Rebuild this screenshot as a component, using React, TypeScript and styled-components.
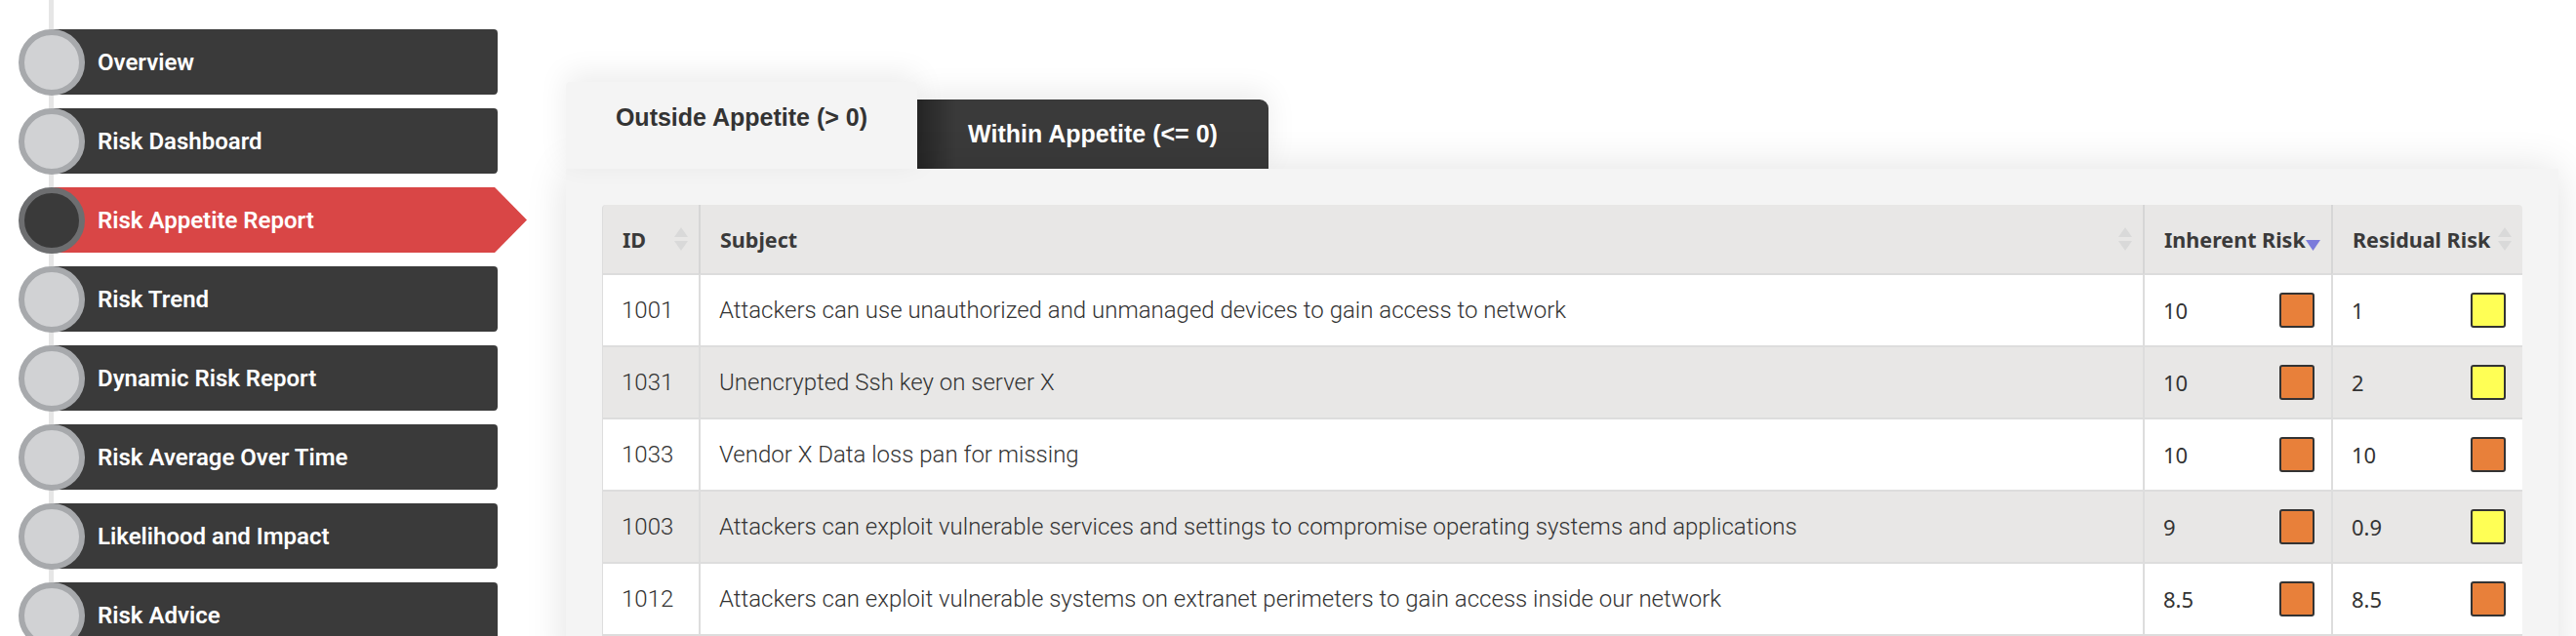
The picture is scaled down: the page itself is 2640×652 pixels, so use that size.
import React from "react";
import styled, { createGlobalStyle } from "styled-components";

type Risk = {
  id: number;
  subject: string;
  inherent: string;
  residual: string;
};

const navItems = [
  "Overview",
  "Risk Dashboard",
  "Risk Appetite Report",
  "Risk Trend",
  "Dynamic Risk Report",
  "Risk Average Over Time",
  "Likelihood and Impact",
  "Risk Advice",
];

const risks: Risk[] = [
  {
    id: 1001,
    subject:
      "Attackers can use unauthorized and unmanaged devices to gain access to network",
    inherent: "10",
    residual: "1",
  },
  { id: 1031, subject: "Unencrypted Ssh key on server X", inherent: "10", residual: "2" },
  { id: 1033, subject: "Vendor X Data loss pan for missing", inherent: "10", residual: "10" },
  {
    id: 1003,
    subject:
      "Attackers can exploit vulnerable services and settings to compromise operating systems and applications",
    inherent: "9",
    residual: "0.9",
  },
  {
    id: 1012,
    subject:
      "Attackers can exploit vulnerable systems on extranet perimeters to gain access inside our network",
    inherent: "8.5",
    residual: "8.5",
  },
];

// scores above 3 are orange, the rest yellow
const riskColor = (score: string) => (parseFloat(score) > 3 ? "#e8803a" : "#ffff55");

const GlobalStyle = createGlobalStyle`
  html, body {
    margin: 0;
    padding: 0;
    background: #fff;
    overflow: hidden;
  }
  body {
    font-family: Roboto, "Liberation Sans", sans-serif;
  }
`;

const Page = styled.div`
  display: flex;
  width: 2640px;
  height: 652px;
  overflow: hidden;
`;

// SIDEBAR
const Sidebar = styled.nav`
  flex: 0 0 580px;
  display: flex;
  flex-direction: column;
  gap: 14px;
  padding: 30px 0 0 19px;
  box-sizing: border-box;
  /* the timeline behind the circles */
  background: linear-gradient(#e6e6e6, #e6e6e6) no-repeat 50px 0 / 5px 100%;
`;

const NavItem = styled.div`
  display: flex;
  align-items: center;
  height: 67px;
  flex: 0 0 67px;
`;

const NavDot = styled.span<{ $active: boolean }>`
  position: relative;
  z-index: 1;
  flex: 0 0 68px;
  height: 68px;
  box-sizing: border-box;
  border-radius: 50%;
  border: 6px solid ${(p) => (p.$active ? "#6d6e70" : "#a7a9ac")};
  background: ${(p) => (p.$active ? "#3a3a3a" : "#d1d2d4")};
`;

const NavBar = styled.div<{ $active: boolean }>`
  margin-left: -34px;
  width: ${(p) => (p.$active ? "487px" : "457px")};
  height: 67px;
  display: flex;
  align-items: center;
  padding-left: 47px;
  box-sizing: border-box;
  border-radius: 4px;
  background: ${(p) => (p.$active ? "#d94646" : "#3a3a3a")};
  clip-path: ${(p) =>
    p.$active
      ? "polygon(0 0, calc(100% - 33px) 0, 100% 50%, calc(100% - 33px) 100%, 0 100%)"
      : "none"};
  color: #fff;
  font-family: Roboto, "Liberation Sans", sans-serif;
  font-weight: 600;
  font-size: 24px;
  white-space: nowrap;
`;

// MAIN
const Main = styled.main`
  flex: 1;
  padding: 84px 18px 0 0;
  display: flex;
  flex-direction: column;
`;

const Tabs = styled.div`
  display: flex;
  align-items: flex-end;
`;

const Tab = styled.div<{ $active: boolean }>`
  position: relative;
  z-index: ${(p) => (p.$active ? 2 : 1)};
  width: 360px;
  height: ${(p) => (p.$active ? "89px" : "71px")};
  display: flex;
  align-items: ${(p) => (p.$active ? "flex-start" : "center")};
  justify-content: center;
  box-sizing: border-box;
  padding-top: ${(p) => (p.$active ? "22px" : "0")};
  border-radius: ${(p) => (p.$active ? "4px 4px 0 0" : "0 9px 0 0")};
  background: ${(p) =>
    p.$active ? "#f4f4f4" : "linear-gradient(to right, #262626, #3a3a3a 40px)"};
  color: ${(p) => (p.$active ? "#333" : "#fff")};
  box-shadow: 0 -8px 30px rgba(0, 0, 0, 0.08);
  font-family: "Liberation Sans", Arial, sans-serif;
  font-weight: 700;
  font-size: 25px;
  white-space: nowrap;
`;

const Panel = styled.section`
  position: relative;
  z-index: 1;
  flex: 1;
  background: #f4f4f4;
  padding: 37px;
  box-shadow: 0 0 40px rgba(0, 0, 0, 0.12);
`;

// TABLE
const Table = styled.table`
  width: 100%;
  border-collapse: separate;
  border-spacing: 0;
  table-layout: fixed;
  color: #3a3a3a;
`;

const HeadCell = styled.th<{ $width?: number }>`
  width: ${(p) => (p.$width ? `${p.$width}px` : "auto")};
  height: 72px;
  box-sizing: border-box;
  padding: 0 11px 0 20px;
  background: #e8e7e6;
  border-bottom: 2px solid #dcdcdc;
  border-left: 2px solid #d6d6d6;
  text-align: left;
  font-family: "Noto Sans", "Open Sans", sans-serif;
  font-weight: 700;
  font-size: 21.5px;
  color: #3a3a3a;
  &:first-child {
    border-left: 1px solid #dcdcdc;
    border-top-left-radius: 4px;
  }
  &:last-child {
    border-top-right-radius: 4px;
  }
`;

const HeadInner = styled.div`
  display: flex;
  align-items: center;
  justify-content: space-between;
  white-space: nowrap;
`;

const Row = styled.tr`
  &:nth-child(2n-1) {
    background: #ffffff;
  }
  &:nth-child(2n) {
    background: #e8e7e6;
  }
`;

const Cell = styled.td`
  height: 74px;
  box-sizing: border-box;
  padding: 0 17px 0 19px;
  border-bottom: 2px solid #dddddd;
  border-left: 2px solid #dddddd;
  font-family: Roboto, "Liberation Sans", sans-serif;
  font-weight: 300;
  font-size: 24px;
  color: #333;
  white-space: nowrap;
  overflow: hidden;
  &:first-child {
    border-left: 1px solid #dddddd;
  }
`;

const ScoreCell = styled(Cell)`
  font-family: "Noto Sans", "Open Sans", sans-serif;
  font-weight: 400;
  font-size: 22px;
`;

const ScoreInner = styled.div`
  display: flex;
  align-items: center;
  justify-content: space-between;
`;

const Swatch = styled.span<{ color: string }>`
  width: 36px;
  height: 36px;
  box-sizing: border-box;
  border: 2px solid #333;
  border-radius: 3px;
  background: ${(p) => p.color};
`;

const SortIcon: React.FC<{ dir?: "desc" }> = ({ dir }) =>
  dir === "desc" ? (
    <svg width="15" height="26" viewBox="0 0 15 26">
      <polygon points="0,14 15,14 7.5,25" fill="#7b7bdb" />
    </svg>
  ) : (
    <svg width="14" height="26" viewBox="0 0 14 26">
      <polygon points="7,1 14,11 0,11" fill="#d9d9d9" />
      <polygon points="0,15 14,15 7,25" fill="#d9d9d9" />
    </svg>
  );

const App: React.FC = () => {
  return (
    <Page>
      <GlobalStyle />
      {/* SIDEBAR */}
      <Sidebar>
        {navItems.map((label) => {
          const active = label === "Risk Appetite Report";
          return (
            <NavItem key={label}>
              <NavDot $active={active} />
              <NavBar $active={active}>{label}</NavBar>
            </NavItem>
          );
        })}
      </Sidebar>

      {/* REPORT */}
      <Main>
        <Tabs>
          <Tab $active>Outside Appetite (&gt; 0)</Tab>
          <Tab $active={false}>Within Appetite (&lt;= 0)</Tab>
        </Tabs>
        <Panel>
          <Table>
            <thead>
              <tr>
                <HeadCell $width={99}>
                  <HeadInner>
                    ID <SortIcon />
                  </HeadInner>
                </HeadCell>
                <HeadCell>
                  <HeadInner>
                    Subject <SortIcon />
                  </HeadInner>
                </HeadCell>
                <HeadCell $width={193}>
                  <HeadInner>
                    Inherent Risk <SortIcon dir="desc" />
                  </HeadInner>
                </HeadCell>
                <HeadCell $width={196}>
                  <HeadInner>
                    Residual Risk <SortIcon />
                  </HeadInner>
                </HeadCell>
              </tr>
            </thead>
            <tbody>
              {risks.map((risk) => (
                <Row key={risk.id}>
                  <Cell>{risk.id}</Cell>
                  <Cell>{risk.subject}</Cell>
                  <ScoreCell>
                    <ScoreInner>
                      {risk.inherent}
                      <Swatch color={riskColor(risk.inherent)} />
                    </ScoreInner>
                  </ScoreCell>
                  <ScoreCell>
                    <ScoreInner>
                      {risk.residual}
                      <Swatch color={riskColor(risk.residual)} />
                    </ScoreInner>
                  </ScoreCell>
                </Row>
              ))}
            </tbody>
          </Table>
        </Panel>
      </Main>
    </Page>
  );
};

export default App;
